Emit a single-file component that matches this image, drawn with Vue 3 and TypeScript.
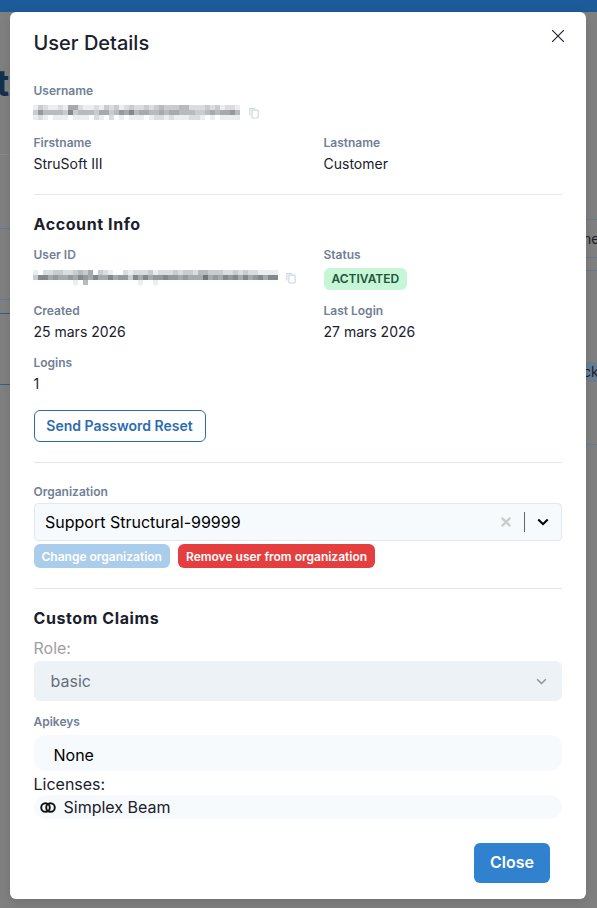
<script setup lang="ts">
const toColor = (c: string) => {
  const v = parseInt(c, 16) * 17;
  return `rgb(${Math.max(v - 3, 0)},${v},${Math.min(v + 3, 255)})`;
};
const toRow = (s: string) => s.split("").map(toColor);
const secretA = [
  "ecdeedeaadeedecdcedcddcdcbcccbbdddcdcedde",
  "c9bbbbc8cbbbcaacb9a8baabbabaabbbccbabaa9b",
  "edefeeefeeefdefdfefeeefeddedeeeddefefeeee",
].map(toRow);
const secretB = [
  "efddccddcbcafcdeffdedddcedddcdccdbbcccddcdcddeeee",
  "c88a9aa9a89a8aa8a99c8a8a99899a9aaa7a9a898a8a98a88",
  "ffffffffefbffffffffffeffeffffffffffffffffffffffff",
].map(toRow);
</script>

<template>
  <div class="page">
    <div class="topbar"></div>
    <div class="behind-t">t</div>
    <i class="bl" style="top:154px;left:0;width:10px;background:#8a8a8a"></i>
    <i class="bl" style="top:228px;left:0;width:10px"></i>
    <i class="bl" style="top:299px;left:0;width:10px"></i>
    <i class="bl dark" style="top:313px;left:0;width:10px"></i>
    <i class="bl dark" style="top:384px;left:0;width:10px"></i>
    <i class="bl" style="top:219px;left:586px;width:11px"></i>
    <i class="bl" style="top:257px;left:586px;width:11px"></i>
    <i class="bl" style="top:270px;left:586px;width:11px"></i>
    <i class="bl" style="top:444px;left:586px;width:11px"></i>
    <div class="behind-r1">ne</div>
    <div class="behind-r2">ck</div>

    <section class="modal">
      <header class="head">
        <h2>User Details</h2>
        <svg class="x" viewBox="0 0 24 24" width="14" height="14"><path d="M2 2 22 22M22 2 2 22" stroke="#1a202c" stroke-width="2" fill="none"/></svg>
      </header>

      <div class="field user">
        <label>Username</label>
        <div class="secret first">
          <div class="pix">
            <div v-for="(row, r) in secretA" :key="r" class="pix-row"><span v-for="(c, i) in row" :key="i" :style="{ background: c }"></span></div>
          </div>
          <svg class="copy" viewBox="0 0 12 14" width="10" height="12"><path d="M1 10V1.500h6.500M3.500 3.500h6.500a1 1 0 0 1 1 1V12a1 1 0 0 1-1 1H4.500a1 1 0 0 1-1-1z" fill="none" stroke="#cbd5e0" stroke-width="1.300"/></svg>
        </div>
      </div>
      <div class="two names">
        <div class="field"><label>Firstname</label><p>StruSoft III</p></div>
        <div class="field"><label>Lastname</label><p>Customer</p></div>
      </div>

      <hr class="d1" />

      <h3 class="acct">Account Info</h3>
      <div class="two info1">
        <div class="field">
          <label>User ID</label>
          <div class="secret second">
            <div class="pix">
              <div v-for="(row, r) in secretB" :key="r" class="pix-row"><span v-for="(c, i) in row" :key="i" :style="{ background: c }"></span></div>
            </div>
            <svg class="copy" viewBox="0 0 12 14" width="10" height="12"><path d="M1 10V1.500h6.500M3.500 3.500h6.500a1 1 0 0 1 1 1V12a1 1 0 0 1-1 1H4.500a1 1 0 0 1-1-1z" fill="none" stroke="#cbd5e0" stroke-width="1.300"/></svg>
          </div>
        </div>
        <div class="field">
          <label>Status</label>
          <div><span class="badge">ACTIVATED</span></div>
        </div>
      </div>
      <div class="two info2">
        <div class="field"><label>Created</label><p>25 mars 2026</p></div>
        <div class="field"><label>Last Login</label><p>27 mars 2026</p></div>
      </div>
      <div class="field info3"><label>Logins</label><p>1</p></div>
      <button class="reset">Send Password Reset</button>

      <hr class="d2" />

      <div class="field org">
        <label>Organization</label>
        <div class="select">
          <span class="val">Support Structural-99999</span>
          <svg class="clear" viewBox="0 0 10 10" width="10" height="10"><path d="M.8.8 9.200 9.200M9.200.8.8 9.200" stroke="#cccccc" stroke-width="2.300" fill="none"/></svg>
          <i class="sep"></i>
          <svg class="chev" viewBox="0 0 14 9" width="12" height="8"><path d="M1.500 1.500 7 7l5.500-5.500" stroke="#000" stroke-width="2.400" fill="none"/></svg>
        </div>
      </div>
      <div class="actions">
        <button class="xs change">Change organization</button>
        <button class="xs remove">Remove user from organization</button>
      </div>

      <hr class="d3" />

      <h3 class="claims">Custom Claims</h3>
      <div class="role-label">Role:</div>
      <div class="role">
        <span>basic</span>
        <svg viewBox="0 0 14 9" width="11" height="7"><path d="M1.500 1.500 7 7l5.500-5.500" stroke="#8a8f98" stroke-width="1.800" fill="none"/></svg>
      </div>
      <label class="api-label">Apikeys</label>
      <div class="none">None</div>
      <div class="lic-label">Licenses:</div>
      <div class="lic">
        <svg viewBox="0 0 16 11" width="16" height="11"><circle cx="5.500" cy="5.500" r="4.300" fill="none" stroke="#111" stroke-width="1.900"/><circle cx="10.500" cy="5.500" r="4.300" fill="none" stroke="#111" stroke-width="1.900"/></svg>
        <span>Simplex Beam</span>
      </div>

      <footer class="foot"><button class="close">Close</button></footer>
    </section>
  </div>
</template>

<style>
html, body { margin: 0; padding: 0; }
</style>

<style scoped>
.page {
  position: relative;
  width: 597px;
  height: 908px;
  overflow: hidden;
  background: #808080;
  font-family: Inter, "Liberation Sans", sans-serif;
  color: #1a202c;
}
.topbar { height: 12px; background: #1c5a99; }
.bl { position: absolute; height: 1px; background: #5f7c96; }
.bl.dark { background: #2f5f8c; }
.behind-t { position: absolute; left: -4px; top: 61px; font: 700 36px/44px Inter, sans-serif; color: #14304d; }
.behind-r1 { position: absolute; left: 583px; top: 230px; font: 14px/17px Inter, sans-serif; color: #1a202c; }
.behind-r2 { position: absolute; left: 586px; top: 362px; width: 11px; height: 20px; background: #6b7f94; font: 14px/20px Inter, sans-serif; color: #1a202c; text-indent: -3px; overflow: hidden; }
.modal {
  position: absolute;
  left: 10px;
  top: 12px;
  width: 576px;
  height: 887px;
  box-sizing: border-box;
  padding: 0 24px 0 23.5px;
  background: #fff;
  border-radius: 6px;
  box-shadow: 0 4px 12px rgba(0,0,0,.12);
}
.head { display: flex; justify-content: space-between; height: 63px; }
h2 { margin: 19px 0 0; font-size: 20px; line-height: 24px; font-weight: 550; color: #1a202c; }
.x { position: absolute; right: 21px; top: 17px; }
label {
  display: block;
  font-size: 12px;
  line-height: 18px;
  font-weight: 600;
  color: #718096;
}
.field p { margin: 2px 0 0; font-size: 14px; line-height: 20px; color: #1a202c; }
.user { margin-top: 7px; }
.secret { display: flex; align-items: center; gap: 9px; margin-left: -.5px; }
.secret.first { height: 21px; margin-top: 2px; }
.secret.first .pix-row span { width: 5.05px; }
.secret.second { height: 21px; margin-top: 3px; gap: 8px; }
.pix { display: flex; flex-direction: column; height: 15px; }
.pix-row { display: flex; height: 5px; }
.pix-row span { width: 5px; height: 100%; }
.names { margin-top: 11px; }
.two { display: grid; grid-template-columns: 290px 1fr; }
hr { border: 0; border-top: 1px solid #e2e8f0; margin: 0; }
.d1 { margin-top: 20px; }
h3 { margin: 0; font-size: 16px; line-height: 20px; font-weight: 700; letter-spacing: .6px; color: #1a202c; }
.acct { margin-top: 19px; }
.info1 { margin-top: 12px; height: 40px; }
.badge {
  display: inline-block;
  margin-top: 4px;
  padding: 0 8px;
  height: 22px;
  line-height: 22px;
  background: #c6f6d5;
  color: #22543d;
  border-radius: 6px;
  font-size: 12px;
  font-weight: 600;
}
.info2 { margin-top: 16px; }
.info3 { margin-top: 12px; }
.reset {
  display: block;
  margin-top: 16px;
  width: 172px;
  height: 32px;
  border: 1px solid #2b6cb0;
  background: #fff;
  color: #2b6cb0;
  border-radius: 6px;
  font: 600 14px Inter, sans-serif;
  padding: 0 0 2px;
}
.d2 { margin-top: 20px; }
.org { margin-top: 21px; }
.org label { line-height: 16px; }
.select {
  display: flex;
  align-items: center;
  margin-top: 3px;
  height: 38px;
  box-sizing: border-box;
  border: 1px solid #e2e8f0;
  border-radius: 4px;
  background: #f7fafc;
  padding: 0 12px 0 10.5px;
  color: #000;
  font-size: 16px;
}
.val { flex: 1; }
.clear { margin-right: 13px; }
.sep { width: 1px; height: 20px; background: #666; margin-right: 12px; }
.actions { display: flex; gap: 8px; margin-top: 3px; }
.xs {
  height: 24px;
  border: 0;
  border-radius: 6px;
  color: #fff;
  font: 600 12px Inter, sans-serif;
  padding: 0 8px;
}
.change { background: #abcdec; }
.remove { background: #e53e3e; }
.d3 { margin-top: 20px; }
.claims { margin-top: 19px; }
.role-label { margin-top: 10px; font-size: 16px; line-height: 20px; color: #a0a0a0; }
.role {
  display: flex;
  align-items: center;
  justify-content: space-between;
  margin-top: 3px;
  height: 40px;
  padding: 0 15px 0 17px;
  background: #edf2f7;
  border-radius: 6px;
  font-size: 16px;
  color: #666f7a;
}
.api-label { margin-top: 13px; line-height: 16px; }
.none {
  margin-top: 5px;
  height: 36px;
  line-height: 40px;
  padding-left: 20px;
  border-radius: 12px;
  background: #f7fafc;
  color: #000;
  font-size: 16px;
}
.lic-label { margin-top: 2px; font-size: 16px; line-height: 22px; color: #1a202c; }
.lic {
  display: flex;
  align-items: center;
  gap: 8px;
  height: 24px;
  padding-left: 6px;
  margin-top: 0;
  background: #f7fafc;
  border-radius: 12px;
  font-size: 16px;
}
.foot { position: absolute; right: 36px; bottom: 16px; }
.close {
  width: 76px;
  height: 40px;
  border: 0;
  border-radius: 6px;
  background: #3182ce;
  color: #fff;
  font: 600 16px Inter, sans-serif;
  padding: 0 0 2px;
}
</style>
